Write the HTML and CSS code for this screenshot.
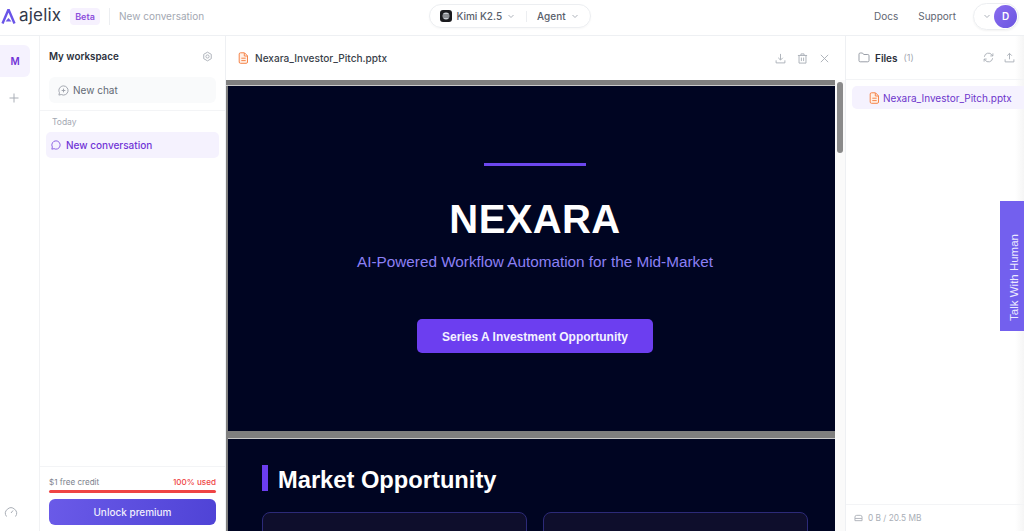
FILE: index.html
```html
<!DOCTYPE html>
<html lang="en">
<head>
<meta charset="utf-8">
<title>Ajelix</title>
<link rel="stylesheet" href="styles.css">
</head>
<body>
<header class="topbar">
  <div class="brand">
    <svg class="logo" width="15" height="17" viewBox="0 0 15 17"><path d="M7.5 1.5 1.5 15.500M7.5 1.500l6 14" fill="none" stroke="#6a55e8" stroke-width="2.4"/><path d="M4.500 13.500h6l-3-3.500z" fill="#6a55e8"/></svg>
    <span class="wordmark">ajelix</span>
    <span class="beta">Beta</span>
    <span class="brand-sep"></span>
    <span class="conv-title">New conversation</span>
  </div>
  <div class="model-pill">
    <svg class="kimi" width="12" height="12" viewBox="0 0 12 12"><rect width="12" height="12" rx="3" fill="#1b1b1f"/><circle cx="6" cy="6" r="3.4" fill="#c9ccd2"/><path d="M3 5h6M3 7h6" stroke="#1b1b1f" stroke-width=".7"/></svg>
    <span>Kimi K2.5</span>
    <svg class="chev" width="8" height="8" viewBox="0 0 8 8"><path d="M1.500 3 4 5.500 6.500 3"/></svg>
    <span class="pill-sep"></span>
    <span>Agent</span>
    <svg class="chev" width="8" height="8" viewBox="0 0 8 8"><path d="M1.500 3 4 5.500 6.500 3"/></svg>
  </div>
  <nav class="top-links">
    <a>Docs</a>
    <a>Support</a>
    <div class="user-pill">
      <svg class="chev" width="8" height="8" viewBox="0 0 8 8"><path d="M1.500 3 4 5.500 6.500 3"/></svg>
      <span class="avatar">D</span>
    </div>
  </nav>
</header>

<div class="body-row">
  <aside class="rail">
    <div class="rail-top">
      <div class="ws-tile">M</div>
      <svg class="rail-plus" width="12" height="12" viewBox="0 0 12 12"><path d="M6 1.500v9M1.500 6h9"/></svg>
    </div>
    <svg class="gauge" width="14" height="12" viewBox="0 0 14 12"><path d="M2.500 10.500a5.500 5.500 0 1 1 9 0M7 7l2-2.500"/></svg>
  </aside>

  <aside class="sidebar">
    <div class="side-top">
      <div class="ws-head">
        <span>My workspace</span>
        <svg class="gear" width="11" height="11" viewBox="0 0 24 24"><path d="M12 2.500l8.200 4.750v9.500L12 21.500l-8.200-4.750v-9.500z"/><circle cx="12" cy="12" r="3.500"/></svg>
      </div>
      <div class="new-chat">
        <svg width="11" height="11" viewBox="0 0 12 12"><path d="M6 1a5 5 0 1 1-2.400 9.400L1 11l.6-2.600A5 5 0 0 1 6 1zM6 4v4M4 6h4"/></svg>
        <span>New chat</span>
      </div>
    </div>
    <div class="history">
      <div class="day">Today</div>
      <div class="conv-item">
        <svg width="10" height="10" viewBox="0 0 12 12"><path d="M6 1a5 5 0 1 1-2.400 9.400L1 11l.6-2.600A5 5 0 0 1 6 1z"/></svg>
        <span>New conversation</span>
      </div>
    </div>
    <div class="credit">
      <div class="credit-row"><span>$1 free credit</span><strong>100% used</strong></div>
      <div class="credit-bar"></div>
      <button class="unlock">Unlock premium</button>
    </div>
  </aside>

  <main class="viewer">
    <div class="viewer-head">
      <div class="file-name">
        <svg class="file-ic" width="11" height="12" viewBox="0 0 11 12"><path d="M2.500.8h4l3 3v6.200a1.300 1.300 0 0 1-1.300 1.300H2.500A1.300 1.300 0 0 1 1.200 10V2.100A1.300 1.300 0 0 1 2.500.8zM6.300 1v3h3M3.300 6.200h4.400M3.300 8.600h4.400"/></svg>
        <span>Nexara_Investor_Pitch.pptx</span>
      </div>
      <div class="head-actions">
        <svg width="11" height="11" viewBox="0 0 12 12"><path d="M6 1v6.500M3.500 5.200 6 7.700l2.500-2.500M1.200 8v2.800h9.600V8"/></svg>
        <svg width="11" height="11" viewBox="0 0 12 12"><path d="M1 2.700h10M4.300 2.700V1h3.400v1.700M2.200 2.700v8.300h7.600V2.700M4.800 5v3.800M7.200 5v3.800"/></svg>
        <svg width="11" height="11" viewBox="0 0 12 12"><path d="M2 2l8 8M10 2l-8 8"/></svg>
      </div>
    </div>
    <div class="deck">
      <div class="slides">
        <section class="slide title-slide">
          <div class="accent-line"></div>
          <h1>NEXARA</h1>
          <p class="subtitle">AI-Powered Workflow Automation for the Mid-Market</p>
          <div class="cta">Series A Investment Opportunity</div>
        </section>
        <section class="slide market-slide">
          <h2>Market Opportunity</h2>
          <div class="cards">
            <div class="card"></div>
            <div class="card"></div>
          </div>
        </section>
      </div>
      <div class="scroll-track"><div class="scroll-thumb"></div></div>
    </div>
  </main>

  <aside class="files">
    <div class="files-head">
      <svg class="folder" width="12" height="11" viewBox="0 0 12 11"><path d="M1 2.200A1.200 1.200 0 0 1 2.200 1h2.300l1.200 1.500h4.100A1.200 1.200 0 0 1 11 3.700v4.900a1.200 1.200 0 0 1-1.200 1.200H2.200A1.200 1.200 0 0 1 1 8.600z"/></svg>
      <strong>Files</strong>
      <span class="count">(1)</span>
      <div class="files-actions">
        <svg width="11" height="11" viewBox="0 0 12 12"><path d="M1.500 5.200A4.500 4.500 0 0 1 9.700 3.200L10.800 4.300M10.800 1.500v2.800H8M10.500 6.800A4.500 4.500 0 0 1 2.300 8.800L1.200 7.700M1.200 10.500V7.700H4"/></svg>
        <svg width="11" height="11" viewBox="0 0 12 12"><path d="M6 8V1.500M3.500 4 6 1.500 8.500 4M1.200 8v2.800h9.600V8"/></svg>
      </div>
    </div>
    <div class="files-list">
      <div class="file-item">
        <svg class="file-ic" width="11" height="12" viewBox="0 0 11 12"><path d="M2.500.8h4l3 3v6.200a1.300 1.300 0 0 1-1.300 1.300H2.500A1.300 1.300 0 0 1 1.200 10V2.100A1.300 1.300 0 0 1 2.500.8zM6.300 1v3h3M3.300 6.200h4.400M3.300 8.600h4.400"/></svg>
        <span>Nexara_Investor_Pitch.pptx</span>
      </div>
    </div>
    <div class="storage">
      <svg width="9" height="8" viewBox="0 0 10 9"><path d="M1 5V3.500A2 2 0 0 1 3 1.500h4a2 2 0 0 1 2 2V5M1 5h8v2.500H1z"/></svg>
      <span>0 B / 20.5 MB</span>
    </div>
  </aside>
</div>

<button class="talk"><span>Talk With Human</span></button>
</body>
</html>
```

FILE: styles.css
```css
* { box-sizing: border-box; }
html, body { margin: 0; height: 100%; }
body {
  display: flex;
  flex-direction: column;
  height: 100vh;
  overflow: hidden;
  background: #fff;
  font-family: Inter, "Liberation Sans", sans-serif;
  color: #374151;
}

/* top bar */
.topbar {
  flex: 0 0 36px;
  display: grid;
  grid-template-columns: 1fr auto 1fr;
  align-items: center;
  border-bottom: 1px solid #eef0f3;
  padding: 0 5px 3px 1px;
}
.brand { display: flex; align-items: center; }
.logo { margin-right: 3px; }
.wordmark { font-size: 17px; font-weight: 400; color: #33384a; width: 43px; margin-top: -2px; letter-spacing: .2px; }
.beta {
  margin-left: 8px;
  width: 30px; height: 17px;
  display: flex; align-items: center; justify-content: center;
  background: #f6f1fe; color: #8d4fdc;
  border-radius: 4px;
  font-size: 9px; font-weight: 600;
}
.brand-sep { width: 1px; height: 17px; background: #eceef1; margin: 0 9px 0 9px; }
.conv-title { font-size: 10px; color: #a3a8b2; }

.model-pill {
  display: flex; align-items: center;
  height: 24px;
  padding: 0 11px 0 10px;
  border: 1px solid #eceef1;
  border-radius: 12px;
  box-shadow: 0 1px 2px rgba(0,0,0,.03);
  font-size: 10px; font-weight: 500; color: #585e6b;
}
.kimi { margin-right: 4px; }
.model-pill .chev { margin-left: 5px; }
.pill-sep { width: 1px; height: 11px; background: #eceef1; margin: 0 10px 0 11px; }
.chev { fill: none; stroke: #aeb3bb; stroke-width: 1; }

.top-links { display: flex; align-items: center; justify-content: flex-end; font-size: 10px; color: #5f6672; }
.top-links a { margin-right: 20px; }
.top-links a + a { margin-right: 17px; }
.user-pill {
  width: 46px; height: 27px;
  display: flex; align-items: center; justify-content: space-between;
  padding: 0 1px 0 9px;
  border: 1px solid #eceef1;
  border-radius: 14px;
  box-shadow: 0 1px 2px rgba(0,0,0,.05);
}
.avatar {
  width: 23px; height: 23px; border-radius: 50%;
  display: flex; align-items: center; justify-content: center;
  background: linear-gradient(135deg, #8a6cf0, #6a55e0);
  color: #fff; font-size: 10px; font-weight: 600;
}

.body-row { flex: 1; display: flex; min-height: 0; }

/* rail */
.rail {
  flex: 0 0 40px;
  display: flex; flex-direction: column; justify-content: space-between; align-items: flex-start;
  padding: 9px 0 13px;
  border-right: 1px solid #f1f2f4;
}
.rail-top { display: flex; flex-direction: column; align-items: center; width: 30px; }
.ws-tile {
  width: 30px; height: 32px;
  display: flex; align-items: center; justify-content: center;
  background: #f5f2fe; color: #7135d6;
  border-radius: 0 6px 6px 0;
  font-size: 10px; font-weight: 600;
}
.rail-plus { margin-top: 15px; fill: none; stroke: #a9aeb6; stroke-width: 1; margin-left: -2px; }
.gauge { margin-left: 4px; fill: none; stroke: #a9aeb6; stroke-width: 1; }

/* sidebar */
.sidebar {
  flex: 0 0 186px;
  display: flex; flex-direction: column;
  border-right: 1px solid #eef0f3;
}
.side-top { padding: 0 9px; height: 75px; border-bottom: 1px solid #f3f4f6; }
.ws-head {
  height: 41px;
  display: flex; align-items: center; justify-content: space-between;
  padding-right: 3px;
  font-size: 9.800px; font-weight: 600; color: #2b303b;
}
.gear { fill: none; stroke: #a9aeb6; stroke-width: 2; }
.new-chat {
  height: 26px;
  display: flex; align-items: center; gap: 4px;
  padding-left: 9px;
  background: #f9fafb; border-radius: 6px;
  font-size: 10px; color: #636975;
}
.new-chat svg { fill: none; stroke: #9a9fa8; stroke-width: 1; }
.history { flex: 1; padding: 0 6px; }
.day { font-size: 8.500px; color: #a3a8b2; padding: 6px 0 0 6px; height: 21px; }
.conv-item {
  height: 26px;
  display: flex; align-items: center; gap: 5px;
  padding-left: 5px;
  background: #f5f2fe; border-radius: 5px;
  color: #7135d6; font-size: 10px; font-weight: 500;
}
.conv-item svg { fill: none; stroke: #7c4be0; stroke-width: 1; }
.credit { padding: 0 9px 6px; border-top: 1px solid #f3f4f6; height: 65px; }
.credit-row {
  display: flex; justify-content: space-between; align-items: center;
  height: 23px; padding-top: 6px;
  font-size: 8.100px; color: #7c828d;
}
.credit-row strong { color: #ef4444; font-weight: 500; }
.credit-bar { height: 3px; background: #ef4444; border-radius: 2px; }
.unlock {
  display: block; width: 100%; height: 26px; margin-top: 6px;
  border: 0; border-radius: 6px;
  background: linear-gradient(100deg, #6a5ae8, #4f43d6);
  color: #f0eefd; font: 500 10px Inter, "Liberation Sans", sans-serif;
}

/* viewer */
.viewer { flex: 1; min-width: 0; display: flex; flex-direction: column; }
.viewer-head {
  flex: 0 0 44px;
  display: flex; align-items: center; justify-content: space-between;
  padding: 0 15px 0 12px;
}
.file-name { display: flex; align-items: center; gap: 6px; font-size: 10.100px; font-weight: 500; color: #3a3f4a; }
.file-ic { fill: #fff1e8; stroke: #f5854a; stroke-width: 1; }
.head-actions { display: flex; gap: 11px; }
.head-actions svg { fill: none; stroke: #a9aeb6; stroke-width: 1; }
.deck { flex: 1; min-height: 0; display: flex; background: #fafafa; }
.slides {
  width: 609px;
  overflow: hidden;
  background: #7f7f7f;
  padding: 1px 0 0 2px;
  border-top: 4px solid #808080;
}
.slides::before { content: ""; display: block; height: 1px; background: #c9c9c9; margin: 0 0 0 -2px; }
.slide { background: #000522; }
.title-slide {
  height: 345px;
  display: flex; flex-direction: column; align-items: center;
  padding: 77px 0 0 7px;
}
.accent-line { width: 102px; height: 3px; background: #6c47ee; }
h1 { margin: 26px 0 0; font: 700 40px/54px "Liberation Sans", sans-serif; color: #fff; letter-spacing: .4px; }
.subtitle { margin: 6px 0 0; font: 400 15.300px/20px "Liberation Sans", sans-serif; color: #8c80f5; }
.cta {
  margin-top: 47px;
  width: 236px; height: 34px;
  padding-top: 2px;
  display: flex; align-items: center; justify-content: center;
  background: #6c3ef0; border-radius: 5px;
  font: 700 12px "Liberation Sans", sans-serif; color: #f4f2ff;
}
.market-slide { margin-top: 8px; padding: 26px 27px 0 34px; height: 200px; box-shadow: 0 -1px 0 #c9c9c9; }
h2 {
  margin: 0;
  height: 26px;
  padding-left: 10px;
  border-left: 6px solid #6c3ef0;
  font: 700 23.700px/30px "Liberation Sans", sans-serif;
  color: #fff;
}
.cards { display: flex; gap: 16px; margin-top: 21px; }
.card { flex: 1; height: 60px; background: #0e0e2c; border: 1px solid #2c2a78; border-radius: 8px; }
.scroll-track { flex: 1; padding: 2px 2px 0 2px; }
.scroll-thumb { height: 71px; background: #8a8a8a; border-radius: 3px; }

/* files */
.files {
  flex: 0 0 179px;
  display: flex; flex-direction: column;
  border-left: 1px solid #eef0f3;
  background: linear-gradient(90deg, #fff 95%, #f5f5f5);
}
.files-head {
  flex: 0 0 44px;
  display: flex; align-items: center;
  padding: 0 9px 0 12px;
  border-bottom: 1px solid #f3f4f6;
  font-size: 10px;
}
.folder { fill: none; stroke: #9a9fa8; stroke-width: 1; margin-right: 5px; }
.files-head strong { font-weight: 600; color: #2b303b; }
.count { margin-left: 6px; font-size: 9px; color: #a3a8b2; }
.files-actions { margin-left: auto; display: flex; gap: 10px; }
.files-actions svg { fill: none; stroke: #a9aeb6; stroke-width: 1; }
.files-list { flex: 1; padding: 6px 0 0 6px; }
.file-item {
  height: 23px;
  display: flex; align-items: center; gap: 3px;
  padding-left: 17px;
  background: #f5f2fe; border-radius: 5px 0 0 5px;
  font-size: 10px; color: #6d35cc; white-space: nowrap;
}
.storage {
  flex: 0 0 27px;
  display: flex; align-items: center; gap: 5px;
  padding-left: 8px;
  border-top: 1px solid #f3f4f6;
  font-size: 8.300px; color: #a9aeb6;
}
.storage svg { fill: none; stroke: #a9aeb6; stroke-width: 1; }

/* floating tab */
.talk {
  position: absolute; top: 201px; right: 0;
  width: 24px; height: 130px;
  padding: 22px 0 0 4px;
  border: 0;
  background: #7360ee;
  display: flex; align-items: center; justify-content: center;
  color: #eceaff;
  font: 400 11.500px "Liberation Sans", sans-serif;
}
.talk span { writing-mode: vertical-rl; transform: rotate(180deg); white-space: nowrap; }
```
